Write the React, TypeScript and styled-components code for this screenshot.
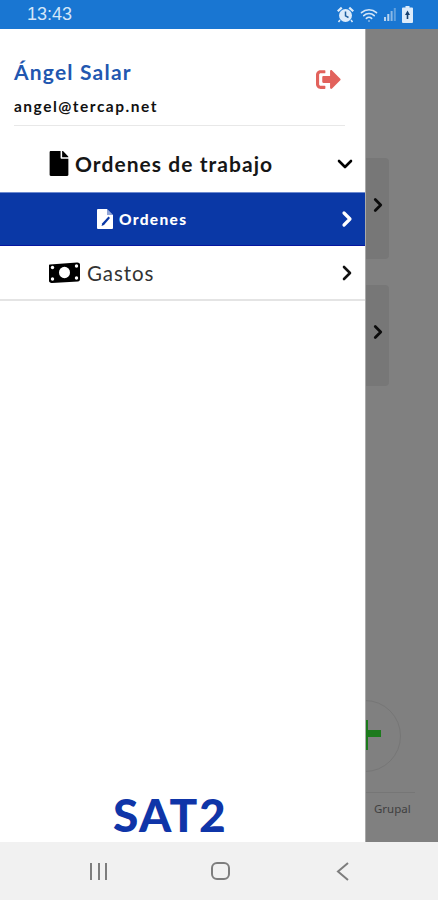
import React from "react";
import styled, {createGlobalStyle} from "styled-components";
import {ChevronDown, ChevronRight, Wifi} from "lucide-react";
import {FaFile, FaSignOutAlt} from "react-icons/fa";

const FONT = `Lato, "Noto Sans", sans-serif`;
const BLUE = "#0a38a6";

const Alarm = () => (
    <svg width="17" height="17" viewBox="0 0 17 17">
        <circle cx="8.500" cy="9.500" r="6.500" fill="#dcebfa" />
        <path d="M0 4.500 4 .8l1.500 1.600-4 3.700zM17 4.500 13 .8l-1.500 1.600 4 3.700z" fill="#dcebfa" />
        <path d="M8.500 5.500v4.300l3 1.700" fill="none" stroke="#1f5f9f" strokeWidth="1.500" />
        <path d="m3 14-1.500 2M14 14l1.500 2" stroke="#dcebfa" strokeWidth="1.500" />
    </svg>
);

const Signal = () => (
    <svg width="12" height="13" viewBox="0 0 12 13" fill="#b9d4f0">
        <rect x="0" y="9" width="2" height="4" />
        <rect x="3.300" y="6" width="2" height="7" />
        <rect x="6.600" y="3" width="2" height="10" opacity="0.7" />
        <rect x="9.800" y="0" width="2" height="13" opacity="0.45" />
    </svg>
);

const Battery = () => (
    <svg width="11" height="17" viewBox="0 0 11 17">
        <path d="M3.500 0h4v1.500H10a1 1 0 0 1 1 1V16a1 1 0 0 1-1 1H1a1 1 0 0 1-1-1V2.500a1 1 0 0 1 1-1h2.500z" fill="#dcebfa" />
        <path d="M5.500 4.500 8 9H6.300v4H4.700V9H3z" fill="#16406f" />
    </svg>
);

const FilePen = () => (
    <svg width="16" height="20" viewBox="0 0 16 20">
        <path d="M1 0h9l6 6v13a1 1 0 0 1-1 1H1a1 1 0 0 1-1-1V1a1 1 0 0 1 1-1z" fill="#fff" />
        <path d="M10 0v6h6z" fill={BLUE} opacity="0.45" />
        <path d="M11.500 7.500 13 9l-6 7-2.500 1 .8-2.700z" fill={BLUE} />
    </svg>
);

const Bill = () => (
    <svg width="31" height="21" viewBox="0 0 31 21">
        <path d="M1 2.500 28 .5c1.500-.1 3 .8 3 2v15c0 1-1 1.800-2 1.900L3 21c-1.500.1-3-.8-3-2V3.500c0-.6.400-1 1-1z" fill="#000" />
        <ellipse cx="15.500" cy="10.500" rx="5.500" ry="5.800" fill="#fff" />
        <circle cx="3.500" cy="5.500" r="1.700" fill="#fff" />
        <circle cx="27.500" cy="4" r="1.700" fill="#fff" />
        <circle cx="3.500" cy="17" r="1.700" fill="#fff" />
        <circle cx="27.500" cy="16" r="1.700" fill="#fff" />
    </svg>
);

const BackArrow = () => (
    <svg width="13" height="19" viewBox="0 0 13 19" fill="none" stroke="#7d7d7d" strokeWidth="2">
        <path d="M12 1 2 9.500 12 18" />
    </svg>
);

const App: React.FC = () => {
    return (
        <Screen>
            <GlobalStyle />
            <StatusBar>
                <Clock>13:43</Clock>
                <StatusIcons>
                    <Alarm />
                    <Wifi size={18} strokeWidth={2.2} />
                    <Signal />
                    <Battery />
                </StatusIcons>
            </StatusBar>
            <Main>
                <BehindPage>
                    <BehindCard><ChevronRight size={22} strokeWidth={3} /></BehindCard>
                    <BehindCard><ChevronRight size={22} strokeWidth={3} /></BehindCard>
                    <AddButton />
                    <BehindTabs>Grupal</BehindTabs>
                </BehindPage>
                <Drawer>
                    <UserHeader>
                        <div>
                            <UserName>Ángel Salar</UserName>
                            <UserMail>angel@tercap.net</UserMail>
                        </div>
                        <Logout><FaSignOutAlt size={25} /></Logout>
                    </UserHeader>
                    <GroupRow>
                        <FaFile />
                        <GroupLabel>Ordenes de trabajo</GroupLabel>
                        <ChevronDown size={24} strokeWidth={2.6} />
                    </GroupRow>
                    <ActiveRow>
                        <FilePen />
                        <ActiveLabel>Ordenes</ActiveLabel>
                        <ChevronRight size={24} strokeWidth={3.2} />
                    </ActiveRow>
                    <PlainRow>
                        <Bill />
                        <PlainLabel>Gastos</PlainLabel>
                        <ChevronRight size={24} strokeWidth={2.6} />
                    </PlainRow>
                    <Brand>SAT2</Brand>
                </Drawer>
            </Main>
            <NavBar>
                <NavBars><span /><span /><span /></NavBars>
                <NavHome />
                <BackArrow />
            </NavBar>
        </Screen>
    );
};

export default App;


const GlobalStyle = createGlobalStyle`
    html, body {
        margin: 0;
        padding: 0;
        background: #fff;
    }
`;

const Screen = styled.div`
    width: 438px;
    height: 900px;
    display: flex;
    flex-direction: column;
    overflow: hidden;
    font-family: ${FONT};
`;

const StatusBar = styled.div`
    height: 29px;
    flex: none;
    box-sizing: border-box;
    padding: 0 25px 0 27px;
    display: flex;
    align-items: center;
    justify-content: space-between;
    background: #1976d2;
    color: #d4e6f8;
`;

const Clock = styled.span`
    font-family: "Liberation Sans", sans-serif;
    font-size: 18px;
`;

const StatusIcons = styled.div`
    display: flex;
    align-items: center;
    gap: 6px;
`;

const Main = styled.div`
    flex: 1;
    position: relative;
    background: #808080;
`;

const BehindPage = styled.div`
    height: 100%;
    box-sizing: border-box;
    padding-top: 129px;
    display: flex;
    flex-direction: column;
    gap: 26px;
`;

const BehindCard = styled.div`
    width: 389px;
    height: 101px;
    box-sizing: border-box;
    padding-bottom: 8px;
    display: flex;
    align-items: center;
    justify-content: flex-end;
    border-radius: 4px;
    background: #777;
    color: #0c0c0c;
`;

const AddButton = styled.div`
    position: absolute;
    left: 329px;
    top: 671px;
    width: 72px;
    height: 72px;
    box-sizing: border-box;
    border: 1px solid #767676;
    border-radius: 50%;

    &::before {
        content: "";
        position: absolute;
        left: 5px;
        top: 29px;
        width: 46px;
        height: 7px;
        background: #1c7a1c;
    }

    &::after {
        content: "";
        position: absolute;
        left: 24px;
        top: 19px;
        width: 14px;
        height: 30px;
        background: #1c7a1c;
    }
`;

const BehindTabs = styled.div`
    position: absolute;
    left: 0;
    top: 763px;
    width: 415px;
    box-sizing: border-box;
    padding: 8px 0 0 374px;
    border-top: 1px solid #767676;
    font-family: "Noto Sans", sans-serif;
    font-size: 11.5px;
    color: #3f3f3f;
`;

const Drawer = styled.div`
    position: absolute;
    left: 0;
    top: 0;
    bottom: 0;
    width: 365px;
    display: flex;
    flex-direction: column;
    background: #fff;
    box-shadow: 1px 0 0 #a9a9a9;
`;

const UserHeader = styled.div`
    height: 97px;
    flex: none;
    box-sizing: border-box;
    margin: 0 20px 0 14px;
    padding-top: 29px;
    display: flex;
    justify-content: space-between;
    border-bottom: 1px solid #e8e8e8;
`;

const UserName = styled.div`
    font-size: 21px;
    line-height: 28px;
    font-weight: 700;
    letter-spacing: 1.2px;
    color: #2257b0;
`;

const UserMail = styled.div`
    margin-top: 9px;
    font-size: 15.5px;
    line-height: 22px;
    font-weight: 700;
    letter-spacing: 1.5px;
    color: #111;
`;

const Logout = styled.div`
    margin: 9px 4px 0 0;
    color: #e2625c;
`;

const MenuRow = styled.div`
    display: flex;
    align-items: center;
    flex: none;
    box-sizing: border-box;
    padding-left: 49px;
`;

const GroupRow = styled(MenuRow)`
    height: 66px;
    padding: 9px 8px 0 49px;
    color: #000;

    & > svg:first-child {
        flex: none;
        width: 20px;
        height: 25px;
    }
`;

const GroupLabel = styled.span`
    flex: 1;
    margin-left: 6px;
    font-size: 21px;
    font-weight: 700;
    letter-spacing: 1.05px;
    color: #161616;
`;

const ActiveRow = styled(MenuRow)`
    height: 54px;
    padding: 0 6px 0 97px;
    background: ${BLUE};
    border-top: 1px solid #6d8ad0;
    border-bottom: 1px solid #0616a0;
    color: #fff;
`;

const ActiveLabel = styled.span`
    flex: 1;
    margin-left: 6px;
    font-size: 15.5px;
    font-weight: 900;
    letter-spacing: 1.3px;
`;

const PlainRow = styled(MenuRow)`
    height: 55px;
    padding-right: 6px;
    border-bottom: 2px solid #e4e4e4;
    color: #111;
`;

const PlainLabel = styled.span`
    flex: 1;
    margin-left: 7px;
    font-size: 20.5px;
    font-weight: 400;
    letter-spacing: 0.9px;
    color: #333;
`;

const Brand = styled.div`
    margin-top: auto;
    padding: 0 0 4px 0;
    width: 340px;
    text-align: center;
    font-size: 46px;
    line-height: 46px;
    font-weight: 900;
    letter-spacing: 1.5px;
    color: #0f35a8;
`;

const NavBar = styled.div`
    height: 58px;
    flex: none;
    box-sizing: border-box;
    padding: 0 89px 0 90px;
    display: flex;
    align-items: center;
    justify-content: space-between;
    background: #f1f1f1;
`;

const NavBars = styled.div`
    width: 17px;
    height: 17px;
    display: flex;
    justify-content: space-between;

    & span {
        width: 2px;
        background: #7d7d7d;
    }
`;

const NavHome = styled.div`
    width: 19px;
    height: 18px;
    margin-left: -3px;
    box-sizing: border-box;
    border: 2px solid #7d7d7d;
    border-radius: 6px;
`;
